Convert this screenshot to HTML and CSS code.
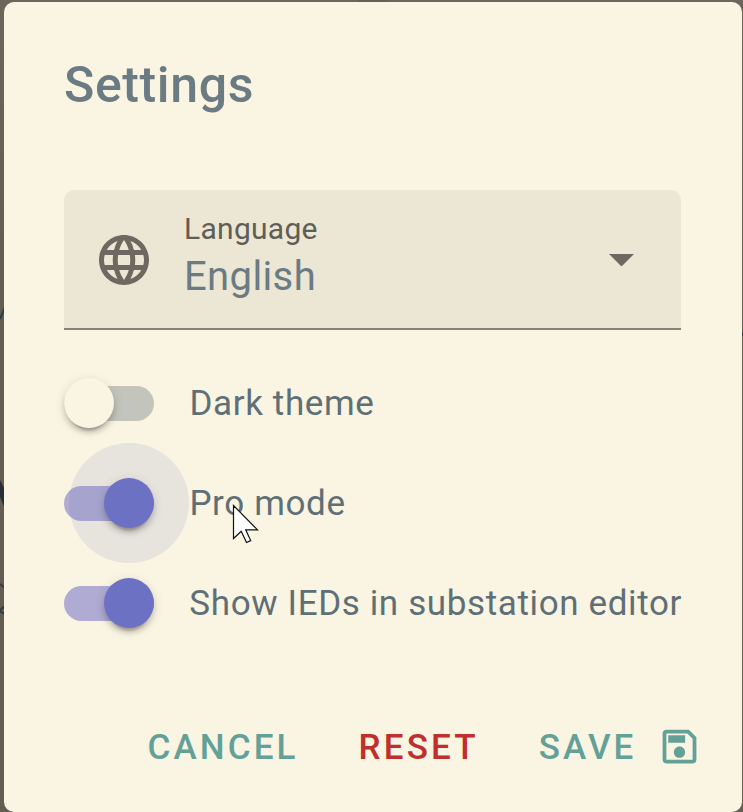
FILE: index.html
```html
<!DOCTYPE html>
<html lang="en">
<head>
<meta charset="utf-8">
<title>Settings</title>
<link rel="stylesheet" href="styles.css">
</head>
<body>
<svg class="backdrop" viewBox="0 0 743 812" aria-hidden="true">
  <path d="M358 0h30v2h-30z" fill="#655f55"/>
  <path d="M0 319 5 307M0 584l5 4M5 606l-6 5 6 3" fill="none" stroke="#303c41" stroke-width="2"/>
  <path d="M0 480l5 10v19L0 497z" fill="#293033"/>
  <path d="M742 333h1v3h-1z" fill="#2f3435"/>
</svg>
<main class="dialog">
  <h1 class="title">Settings</h1>
  <div class="select">
    <svg class="globe" viewBox="0 0 24 24"><path d="M11.99 2C6.47 2 2 6.48 2 12s4.47 10 9.99 10C17.52 22 22 17.52 22 12S17.52 2 11.99 2zm6.93 6h-2.95c-.32-1.25-.78-2.45-1.38-3.56 1.84.63 3.37 1.91 4.33 3.56zM12 4.04c.83 1.2 1.48 2.53 1.91 3.96h-3.82c.43-1.43 1.08-2.76 1.91-3.96zM4.26 14C4.1 13.36 4 12.69 4 12s.1-1.36.26-2h3.38c-.08.66-.14 1.32-.14 2s.06 1.34.14 2H4.26zm.82 2h2.95c.32 1.25.78 2.45 1.38 3.56-1.84-.63-3.37-1.9-4.33-3.56zm2.95-8H5.08c.96-1.66 2.49-2.93 4.33-3.56C8.81 5.55 8.35 6.75 8.03 8zM12 19.96c-.83-1.2-1.48-2.53-1.91-3.96h3.82c-.43 1.43-1.08 2.76-1.91 3.96zM14.34 14H9.66c-.09-.66-.16-1.32-.16-2s.07-1.35.16-2h4.68c.09.65.16 1.32.16 2s-.07 1.34-.16 2zm.25 5.56c.6-1.11 1.06-2.31 1.38-3.56h2.95c-.96 1.65-2.49 2.93-4.33 3.56zM16.36 14c.08-.66.14-1.32.14-2s-.06-1.34-.14-2h3.38c.16.64.26 1.31.26 2s-.1 1.36-.26 2h-3.38z"/></svg>
    <div class="field">
      <span class="label">Language</span>
      <span class="value">English</span>
    </div>
    <svg class="arrow" viewBox="0 0 10 5"><path d="M0 0h10L5 5z"/></svg>
  </div>
  <div class="options">
    <div class="option">
      <span class="switch"><span class="thumb"></span></span>
      <span class="text">Dark theme</span>
    </div>
    <div class="option">
      <span class="switch on focused"><span class="thumb"></span></span>
      <span class="text">Pro mode</span>
    </div>
    <div class="option">
      <span class="switch on"><span class="thumb"></span></span>
      <span class="text">Show IEDs in substation editor</span>
    </div>
  </div>
  <div class="actions">
    <button class="button">CANCEL</button>
    <button class="button danger">RESET</button>
    <button class="button save">SAVE
      <svg viewBox="0 0 24 24"><path d="M17 3H5c-1.11 0-2 .9-2 2v14c0 1.1.89 2 2 2h14c1.1 0 2-.9 2-2V7l-4-4zm2 16H5V5h11.17L19 7.83V19zm-7-7c-1.66 0-3 1.34-3 3s1.34 3 3 3 3-1.34 3-3-1.34-3-3-3zM6 6h9v4H6z"/></svg>
    </button>
  </div>
</main>
<svg class="cursor" viewBox="0 0 27 41" aria-hidden="true"><path d="M1.5 1.5v33l7.7-7.3 5.3 11.3 4.2-1.9-5-10.8h11.8z"/></svg>
</body>
</html>
```
FILE: styles.css
```css
* { box-sizing: border-box; }
body {
  margin: 0;
  height: 812px;
  padding: 2px 1px 0 4px;
  overflow: hidden;
  background: linear-gradient(#6b665c, #625e54 30%, #625e54);
  font-family: Roboto, sans-serif;
}
.backdrop { position: absolute; left: 0; top: 0; width: 743px; height: 812px; z-index: -1; }
.dialog {
  height: 810px;
  padding: 52px 60px 0;
  border-radius: 10px;
  background: #faf4e2;
  color: #657b83;
}
.title {
  margin: 0;
  height: 136px;
  font-size: 50px;
  font-weight: 500;
  line-height: 62px;
  letter-spacing: .625px;
  color: #6b7b83;
}
.select {
  display: flex;
  align-items: center;
  width: 617px;
  height: 140px;
  padding: 2px 47px 0 30px;
  border-bottom: 2px solid #86847a;
  border-radius: 10px 10px 0 0;
  background: #ece6d4;
}
.globe { width: 60px; height: 60px; fill: #6d6961; }
.field { display: flex; flex-direction: column; flex: 1; margin: -9px 0 0 30px; }
.label { font-size: 30px; line-height: 42px; letter-spacing: .28px; color: #5f5e56; }
.value { font-size: 40px; line-height: 53px; letter-spacing: .375px; color: #6b7b83; }
.arrow { width: 25px; height: 12.5px; fill: #6d6961; }
.options { padding-top: 23px; }
.option { display: flex; align-items: center; height: 100px; }
.switch {
  position: relative;
  display: flex;
  align-items: center;
  width: 90px;
  height: 35px;
  border-radius: 18px;
  background: #c3c5bc;
}
.thumb {
  z-index: 1;
  width: 50px;
  height: 50px;
  border-radius: 50%;
  background: #faf4e2;
  box-shadow: 0 7.5px 2.5px -5px rgba(0,0,0,.2), 0 5px 5px rgba(0,0,0,.14), 0 2.5px 12px rgba(0,0,0,.12);
}
.on { justify-content: flex-end; background: #afabd2; }
.on .thumb { background: #6c71c4; }
.focused::before {
  content: "";
  position: absolute;
  left: 5px;
  top: -43px;
  width: 120px;
  height: 120px;
  border-radius: 50%;
  background: rgba(108,113,196,.13);
}
.text { margin: 2px 0 0 35.4px; font-size: 35px; line-height: 50px; letter-spacing: .625px; color: #5f6f76; white-space: nowrap; }
.actions { display: flex; align-items: center; justify-content: flex-end; height: 90px; margin: 50px -29.5px 0 0; }
.button {
  display: flex;
  align-items: center;
  height: 90px;
  margin: 0;
  padding: 0 20px;
  border: 0;
  background: none;
  font: 500 35px/90px Roboto, sans-serif;
  letter-spacing: 3.125px;
  color: #63a198;
}
.danger { margin-left: 20px; color: #bf2f2d; }
.save { margin-left: 20px; }
.save svg { width: 45px; height: 45px; margin: -4px -10px 0 20px; fill: currentColor; }
.cursor { position: absolute; left: 232px; top: 504px; z-index: 2; width: 27px; height: 41px; fill: #fff; stroke: #111; stroke-width: 1.2; }
```
